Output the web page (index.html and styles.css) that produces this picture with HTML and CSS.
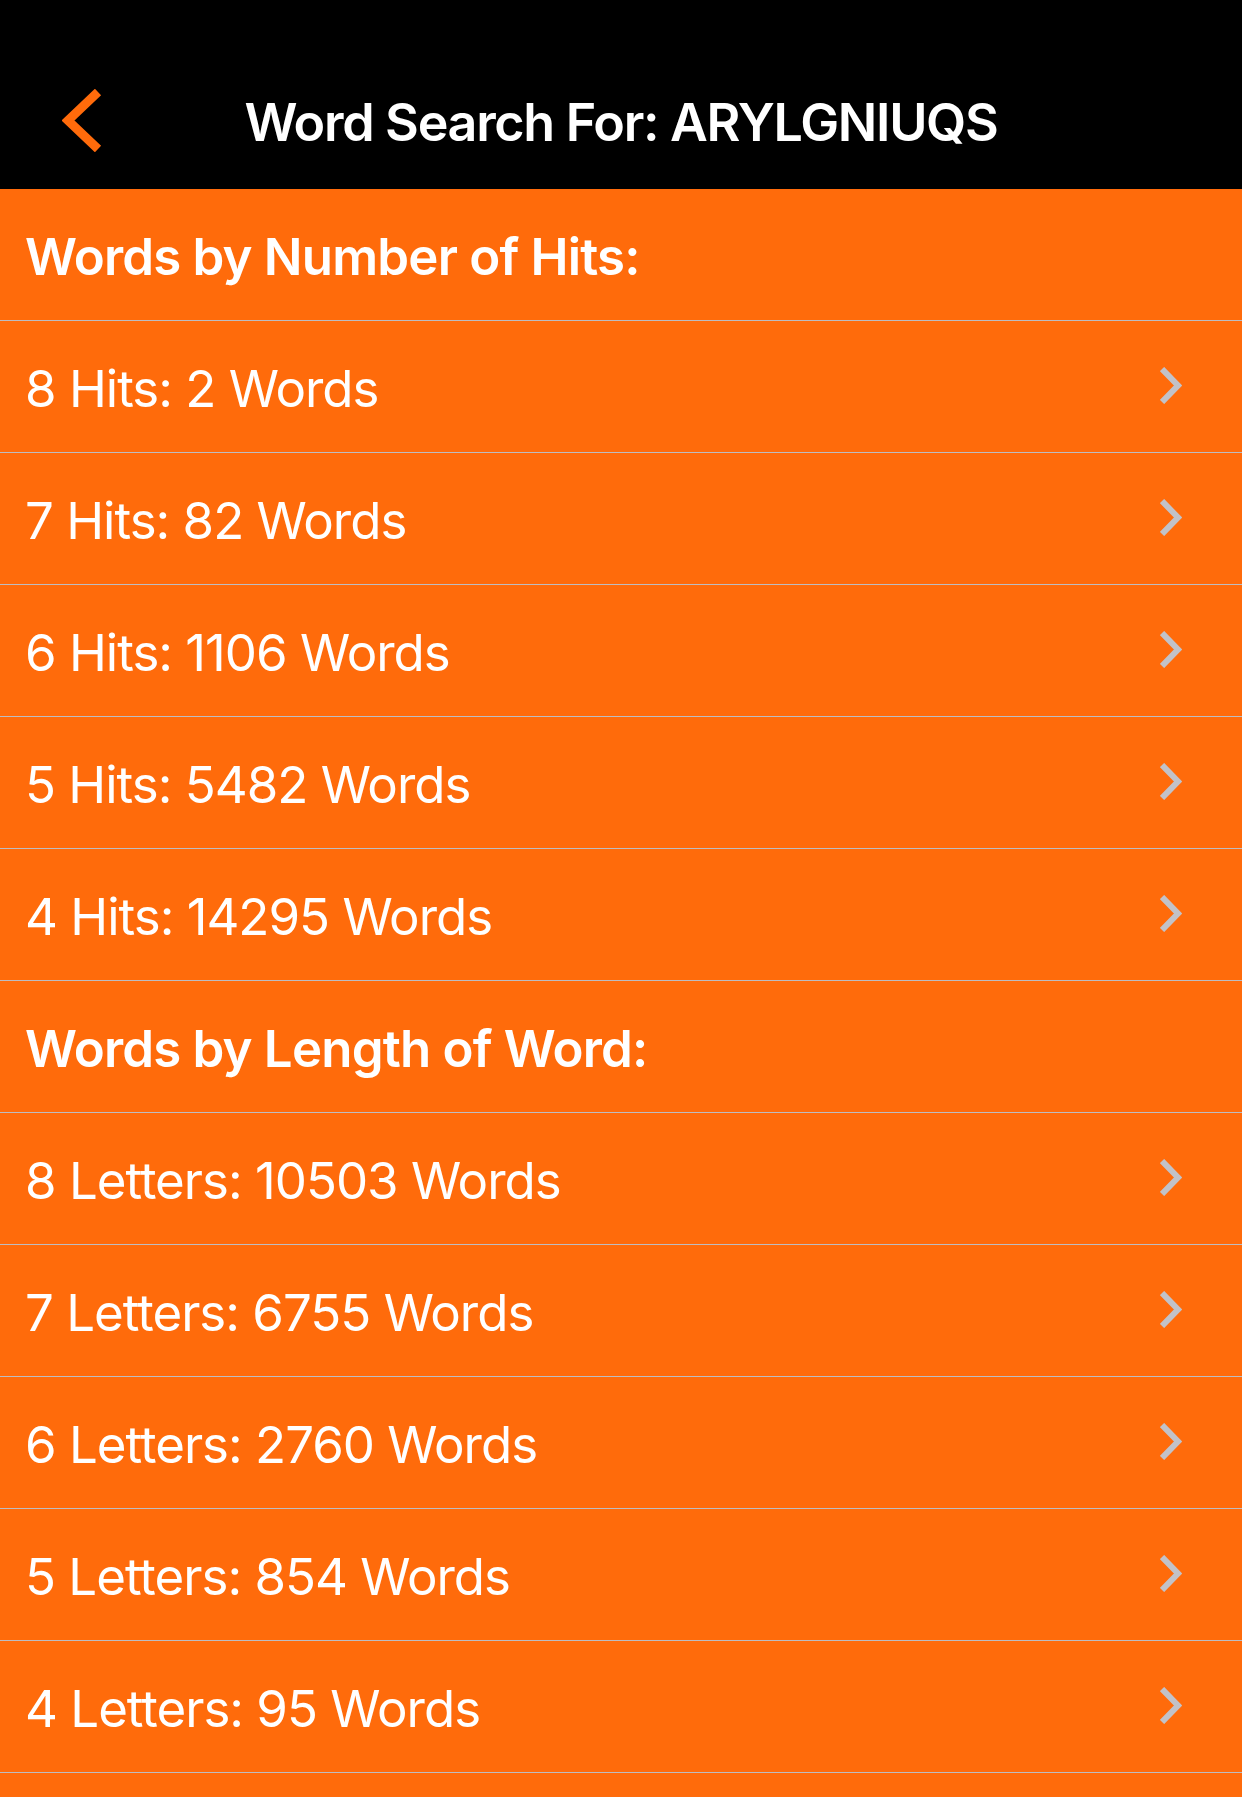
FILE: index.html
```html
<!DOCTYPE html>
<html>
<head>
<meta charset="utf-8">
<link rel="stylesheet" href="styles.css">
</head>
<body>
<header class="nav">
  <div class="nav-left">
    <svg class="back" width="40" height="63" viewBox="0 0 40 63"><polyline points="36,3 6,31.5 36,60" fill="none" stroke="#ff6b0b" stroke-width="9"/></svg>
  </div>
  <div class="title">Word Search For: ARYLGNIUQS</div>
  <div></div>
</header>
<main class="list">
  <div class="row section">Words by Number of Hits:</div>
  <div class="row item"><span>8 Hits: 2 Words</span><svg class="chev" width="22" height="37" viewBox="0 0 22 37"><polyline points="2,2 18,18.5 2,35" fill="none" stroke="#c2c2c8" stroke-width="6"/></svg></div>
  <div class="row item"><span>7 Hits: 82 Words</span><svg class="chev" width="22" height="37" viewBox="0 0 22 37"><polyline points="2,2 18,18.5 2,35" fill="none" stroke="#c2c2c8" stroke-width="6"/></svg></div>
  <div class="row item"><span>6 Hits: 1106 Words</span><svg class="chev" width="22" height="37" viewBox="0 0 22 37"><polyline points="2,2 18,18.5 2,35" fill="none" stroke="#c2c2c8" stroke-width="6"/></svg></div>
  <div class="row item"><span>5 Hits: 5482 Words</span><svg class="chev" width="22" height="37" viewBox="0 0 22 37"><polyline points="2,2 18,18.5 2,35" fill="none" stroke="#c2c2c8" stroke-width="6"/></svg></div>
  <div class="row item"><span>4 Hits: 14295 Words</span><svg class="chev" width="22" height="37" viewBox="0 0 22 37"><polyline points="2,2 18,18.5 2,35" fill="none" stroke="#c2c2c8" stroke-width="6"/></svg></div>
  <div class="row section">Words by Length of Word:</div>
  <div class="row item"><span>8 Letters: 10503 Words</span><svg class="chev" width="22" height="37" viewBox="0 0 22 37"><polyline points="2,2 18,18.5 2,35" fill="none" stroke="#c2c2c8" stroke-width="6"/></svg></div>
  <div class="row item"><span>7 Letters: 6755 Words</span><svg class="chev" width="22" height="37" viewBox="0 0 22 37"><polyline points="2,2 18,18.5 2,35" fill="none" stroke="#c2c2c8" stroke-width="6"/></svg></div>
  <div class="row item"><span>6 Letters: 2760 Words</span><svg class="chev" width="22" height="37" viewBox="0 0 22 37"><polyline points="2,2 18,18.5 2,35" fill="none" stroke="#c2c2c8" stroke-width="6"/></svg></div>
  <div class="row item"><span>5 Letters: 854 Words</span><svg class="chev" width="22" height="37" viewBox="0 0 22 37"><polyline points="2,2 18,18.5 2,35" fill="none" stroke="#c2c2c8" stroke-width="6"/></svg></div>
  <div class="row item"><span>4 Letters: 95 Words</span><svg class="chev" width="22" height="37" viewBox="0 0 22 37"><polyline points="2,2 18,18.5 2,35" fill="none" stroke="#c2c2c8" stroke-width="6"/></svg></div>
</main>
</body>
</html>
```
FILE: styles.css
```css
html, body {
  margin: 0;
  padding: 0;
}
body {
  width: 1242px;
  height: 1797px;
  overflow: hidden;
  background: #ff6b0b;
  font-family: Inter, "Liberation Sans", sans-serif;
  color: #ffffff;
}
.nav {
  box-sizing: border-box;
  height: 189px;
  padding-top: 55px;
  background: #000000;
  display: grid;
  grid-template-columns: 1fr auto 1fr;
  align-items: center;
}
.nav-left {
  display: flex;
  align-items: center;
  padding-left: 62px;
  margin-top: -4px;
}
.back {
  display: block;
}
.title {
  font-size: 52px;
  font-weight: 600;
  letter-spacing: -1.3px;
  white-space: nowrap;
}
.list {
  display: flex;
  flex-direction: column;
}
.row {
  box-sizing: border-box;
  height: 132px;
  border-bottom: 1px solid #bdbdc2;
  display: flex;
  align-items: center;
  justify-content: space-between;
  padding: 4px 60px 0 25px;
}
.section {
  font-size: 51px;
  font-weight: 600;
  letter-spacing: -0.8px;
}
.item {
  font-size: 51px;
  font-weight: 400;
  letter-spacing: -1px;
}
.chev {
  display: block;
  margin-top: -7px;
}
```
